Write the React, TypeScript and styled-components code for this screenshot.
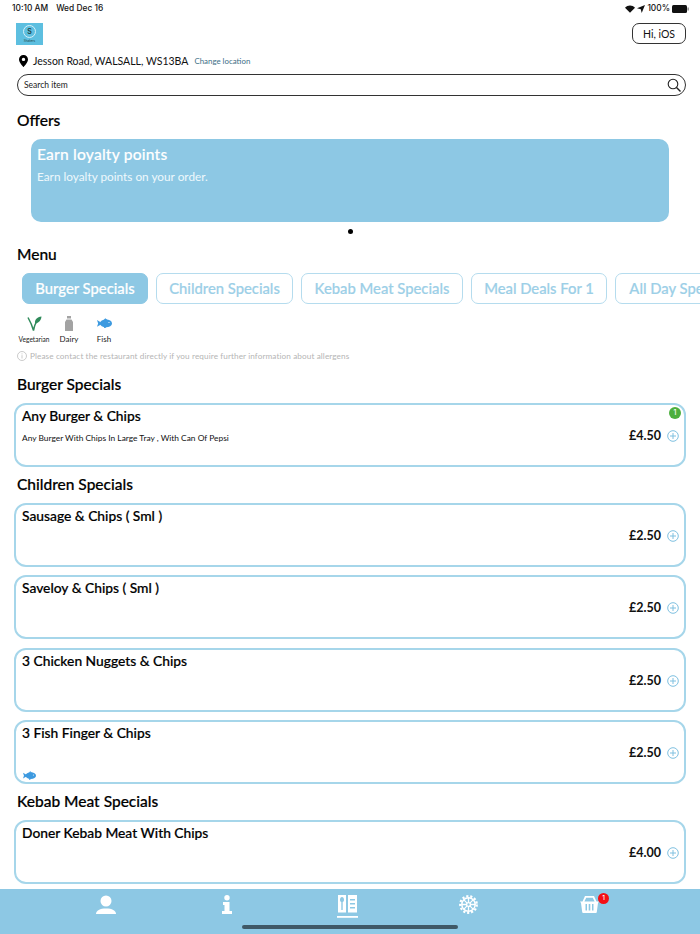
import React from "react";
import styled, { createGlobalStyle } from "styled-components";

const BLUE = "#8dc8e4";
const Global = createGlobalStyle`
  html, body { margin: 0; padding: 0; background: #fff; }
  body { font-family: Lato, "Noto Sans", sans-serif; color: #000; }
`;
const Page = styled.div`
  width: 700px; height: 934px; overflow: hidden; display: flex; flex-direction: column; position: relative;
`;
const Content = styled.main`
  height: 889px; overflow: hidden; flex: none;
`;
const StatusBar = styled.div`
  height: 15px; padding: 1px 11px 0 12px; display: flex; justify-content: space-between; align-items: center;
  font: 500 8.4px/15px Inter, sans-serif; color: #111;
`;
const StatusLeft = styled.div`display: flex; gap: 8px;`;
const StatusRight = styled.div`display: flex; align-items: center; gap: 2px;`;
const Header = styled.header`
  display: flex; justify-content: space-between; align-items: flex-start; padding: 7px 14px 0 16px; height: 24px;
`;
const Logo = styled.div`
  width: 27px; height: 22px; background: #5dbfe0; display: flex; flex-direction: column; align-items: center;
`;
const LogoRing = styled.div`
  width: 11px; height: 11px; margin-top: 2px; border: 1px solid #d8f0f8; border-radius: 50%;
  font: 600 7px/11px Inter, sans-serif; color: #244; text-align: center;
`;
const LogoText = styled.div`font: 3px/4px Inter, sans-serif; color: #244; margin-top: 1px;`;
const HiButton = styled.button`
  width: 54px; height: 21px; padding: 0; background: #fff; border: 1px solid #333; border-radius: 7px;
  font: 400 10.5px Lato, sans-serif; color: #111;
`;
const LocationRow = styled.div`
  display: flex; align-items: center; height: 20px; margin-top: 4px; padding-left: 19px;
`;
const LocationText = styled.span`font-size: 10.5px; margin-left: 5px; color: #111;`;
const ChangeLink = styled.span`font-size: 7.9px; margin-left: 6px; color: #3d6f86;`;
const SearchBar = styled.div`
  margin: 3px 14px 0 17px; height: 20px; border: 1px solid #333; border-radius: 11px; padding: 0 4px 0 6px;
  display: flex; align-items: center; justify-content: space-between; font-size: 8.5px; color: #222;
`;
const Heading = styled.h2<{ $top: number; $size?: number }>`
  margin: ${(p) => p.$top}px 0 0 17px; font-size: ${(p) => p.$size ?? 15.5}px; line-height: 20px; font-weight: 500; color: #000;
  -webkit-text-stroke: 0.2px #000;
`;
const Banner = styled.section`
  margin: 9px 31px 0; height: 83px; background: ${BLUE}; border-radius: 10px; padding: 5px 6px; box-sizing: border-box; color: #fff;
`;
const BannerTitle = styled.div`font-size: 15.6px; line-height: 20px; font-weight: 500; letter-spacing: 0.2px; -webkit-text-stroke: 0.15px #fff;`;
const BannerText = styled.div`font-size: 11.8px; line-height: 16px; margin-top: 5px; color: #eef8fc;`;
const Dot = styled.div`width: 5px; height: 5px; border-radius: 50%; background: #000; margin: 7px auto 0;`;
const Tabs = styled.nav`display: flex; gap: 8px; margin: 9px 0 0 22px; width: 800px;`;
const Tab = styled.div<{ $active?: boolean; $w: number }>`
  flex: none; width: ${(p) => p.$w}px; height: 31px; box-sizing: border-box; border-radius: 7px;
  border: 1px solid ${(p) => (p.$active ? BLUE : "#b5dcee")}; background: ${(p) => (p.$active ? BLUE : "#fff")};
  color: ${(p) => (p.$active ? "#fff" : "#9ccfe7")}; font-size: 14.8px; font-weight: 500; line-height: 29px; text-align: center; white-space: nowrap; overflow: hidden;
  -webkit-text-stroke: 0.2px ${(p) => (p.$active ? "#fff" : "#9ccfe7")};
`;
const Legend = styled.div`display: flex; margin: 9px 0 0 17px;`;
const LegendItem = styled.div<{ $w: number }>`
  width: ${(p) => p.$w}px; display: flex; flex-direction: column; align-items: center;
`;
const LegendIcon = styled.div`height: 20px; display: flex; align-items: center; justify-content: center;`;
const LegendLabel = styled.div<{ $size: number }>`font-size: ${(p) => p.$size}px; line-height: 12px; color: #222;`;
const Note = styled.div`
  display: flex; align-items: center; gap: 3px; margin: 5px 0 0 17px; font-size: 8.2px; line-height: 12px; color: #b5b5b5; letter-spacing: 0.1px;
`;
const Card = styled.article<{ $top: number }>`
  position: relative; margin: ${(p) => p.$top}px 14px 0; height: 64px; box-sizing: border-box;
  border: 2px solid #a6d6ea; border-radius: 12px; padding: 1px 6px;
`;
const ItemName = styled.div`font-size: 13.8px; line-height: 20px; font-weight: 500; color: #000; -webkit-text-stroke: 0.2px #000;`;
const ItemDesc = styled.div`font-size: 8.4px; line-height: 12px; margin-top: 6px; color: #111;`;
const PriceRow = styled.div`
  position: absolute; right: 5px; top: 22px; display: flex; align-items: center; gap: 6px; font-size: 12.5px; font-weight: 700; line-height: 18px; color: #111;
`;
const CountBadge = styled.div`
  position: absolute; right: 3px; top: 2px; width: 12px; height: 12px; border-radius: 50%; background: #4caf3d; color: #fff;
  font: 500 7px/12px Inter, sans-serif; text-align: center;
`;
const CardIcon = styled.div`position: absolute; left: 7px; bottom: 2px; line-height: 0;`;
const Footer = styled.footer`
  position: relative; height: 45px; background: ${BLUE}; display: flex; align-items: flex-start;
`;
const FooterItem = styled.div<{ $left: number; $top: number }>`
  position: absolute; left: ${(p) => p.$left}px; top: ${(p) => p.$top}px; line-height: 0;
`;
const CartBadge = styled.div`
  position: absolute; left: 598px; top: 4px; width: 11px; height: 11px; border-radius: 50%; background: #f40f14; color: #fff;
  font: 500 6.5px/11px Inter, sans-serif; text-align: center;
`;
const HomeBar = styled.div`
  position: absolute; left: 242px; bottom: 5px; width: 216px; height: 4px; border-radius: 2px; background: #3f5967;
`;

const Plus = () => (
  <svg width="12" height="12" viewBox="0 0 12 12" fill="none" stroke="#7fc0e0" strokeWidth="1">
    <circle cx="6" cy="6" r="5.3" /><path d="M6 3v6M3 6h6" />
  </svg>
);
const Fish = ({ w = 15 }: { w?: number }) => (
  <svg width={w} height={w * 0.72} viewBox="0 0 20 14" fill="#3d9ae0">
    <ellipse cx="12" cy="7" rx="8" ry="5.300" />
    <path d="M0 2.500 6 6v2l-6 3.500L1.500 7ZM9 2.500 11 0l3 2.500ZM9 11l1 3 3-2.500Z" />
    <circle cx="16" cy="5.800" r=".8" fill="#fff" />
  </svg>
);
const Pin = () => (
  <svg width="9" height="12" viewBox="0 0 9 12"><path fillRule="evenodd" d="M4.500 0A4.400 4.400 0 0 0 0 4.400C0 7.500 4.500 12 4.500 12S9 7.500 9 4.400A4.400 4.400 0 0 0 4.500 0Zm0 2.700a1.700 1.700 0 1 1 0 3.400 1.700 1.700 0 0 1 0-3.400Z" fill="#000" /></svg>
);
const SearchIcon = () => (
  <svg width="14" height="14" viewBox="0 0 14 14" fill="none" stroke="#222" strokeWidth="1.100"><circle cx="6" cy="6" r="4.800" /><path d="m9.500 9.500 4 4" strokeWidth="1.400" /></svg>
);
const Items = ["Sausage & Chips ( Sml )", "Saveloy & Chips ( Sml )", "3 Chicken Nuggets & Chips"];

const Price = ({ v }: { v: string }) => <PriceRow>{v}<Plus /></PriceRow>;

export default function App() {
  return (
    <Page>
      <Global />
      <Content>
        <StatusBar>
          <StatusLeft><span>10:10 AM</span><span>Wed Dec 16</span></StatusLeft>
          <StatusRight>
            <svg width="10" height="8" viewBox="0 0 11 8"><path d="M5.500 8 0 2.500C3 -.7 8 -.7 11 2.500Z" fill="#111" /></svg>
            <svg width="8" height="8" viewBox="0 0 8 8"><path d="M8 0 4.700 8 3.800 4.200 0 3.300Z" fill="#111" /></svg>
            <span>100%</span>
            <svg width="17" height="8" viewBox="0 0 17 8"><rect width="15" height="8" rx="1.500" fill="#111" /><rect x="15.500" y="2.500" width="1.200" height="3" fill="#777" /></svg>
          </StatusRight>
        </StatusBar>
        <Header>
          <Logo><LogoRing>S</LogoRing><LogoText>Shakers</LogoText></Logo>
          <HiButton>Hi, iOS</HiButton>
        </Header>
        <LocationRow>
          <Pin />
          <LocationText>Jesson Road, WALSALL, WS13BA</LocationText>
          <ChangeLink>Change location</ChangeLink>
        </LocationRow>
        <SearchBar>Search item<SearchIcon /></SearchBar>
        <Heading $top={14} $size={15.6}>Offers</Heading>
        <Banner>
          <BannerTitle>Earn loyalty points</BannerTitle>
          <BannerText>Earn loyalty points on your order.</BannerText>
        </Banner>
        <Dot />
        <Heading $top={10}>Menu</Heading>
        <Tabs>
          <Tab $active $w={126}>Burger Specials</Tab>
          <Tab $w={137}>Children Specials</Tab>
          <Tab $w={162}>Kebab Meat Specials</Tab>
          <Tab $w={136}>Meal Deals For 1</Tab>
          <Tab $w={131}>All Day Specials</Tab>
        </Tabs>
        <Legend>
          <LegendItem $w={34}>
            <LegendIcon>
              <svg width="15" height="15" viewBox="0 0 15 15" fill="none" stroke="#2f8a5a" strokeWidth="1.500">
                <path d="M1 1.500C3 5 5 9 6.500 14.500 7.500 9 9 6 11 4" />
                <path d="M14.500 .5C10 1 7.500 3.500 8 7.500 12 7 14 4.500 14.500 .5Z" fill="#2f8a5a" stroke="none" />
              </svg>
            </LegendIcon>
            <LegendLabel $size={6.6}>Vegetarian</LegendLabel>
          </LegendItem>
          <LegendItem $w={36}>
            <LegendIcon>
              <svg width="8" height="15" viewBox="0 0 8 15" fill="#a3a3a3"><rect x="2" y="0" width="4" height="2.500" /><path d="M1.500 3.500h5L8 6v9H0V6Z" /></svg>
            </LegendIcon>
            <LegendLabel $size={8}>Dairy</LegendLabel>
          </LegendItem>
          <LegendItem $w={34}>
            <LegendIcon><Fish /></LegendIcon>
            <LegendLabel $size={8}>Fish</LegendLabel>
          </LegendItem>
        </Legend>
        <Note>
          <svg width="10" height="10" viewBox="0 0 10 10" fill="none" stroke="#b5b5b5" strokeWidth=".7"><circle cx="5" cy="5" r="4.500" /><path d="M5 4.200V7.500M5 2.400v1" /></svg>
          Please contact the restaurant directly if you require further information about allergens
        </Note>
        <Heading $top={12}>Burger Specials</Heading>
        <Card $top={9}>
          <ItemName>Any Burger &amp; Chips</ItemName>
          <ItemDesc>Any Burger With Chips In Large Tray , With Can Of Pepsi</ItemDesc>
          <CountBadge>1</CountBadge>
          <Price v="£4.50" />
        </Card>
        <Heading $top={7}>Children Specials</Heading>
        {Items.map((name, i) => (
          <Card key={name} $top={i === 0 ? 9 : i === 2 ? 9 : 8}>
            <ItemName>{name}</ItemName>
            <Price v="£2.50" />
          </Card>
        ))}
        <Card $top={8}>
          <ItemName>3 Fish Finger &amp; Chips</ItemName>
          <Price v="£2.50" />
          <CardIcon><Fish w={13} /></CardIcon>
        </Card>
        <Heading $top={7}>Kebab Meat Specials</Heading>
        <Card $top={9}>
          <ItemName>Doner Kebab Meat With Chips</ItemName>
          <Price v="£4.00" />
        </Card>
      </Content>
      <Footer>
        <FooterItem $left={96} $top={6}>
          <svg width="20" height="19" viewBox="0 0 20 19" fill="#fff"><circle cx="10" cy="6" r="5.500" /><path d="M0 19c0-3.500 4-5.500 10-5.500S20 15.500 20 19Z" /></svg>
        </FooterItem>
        <FooterItem $left={222} $top={6}>
          <svg width="10" height="19" viewBox="0 0 10 19" fill="#fff"><circle cx="5" cy="2.700" r="2.700" /><path d="M1 7h6.500v9H10v3H0v-3h2.500v-6H1Z" /></svg>
        </FooterItem>
        <FooterItem $left={337} $top={6}>
          <svg width="21" height="23" viewBox="0 0 21 23" fill="#fff">
            <path fillRule="evenodd" d="M1 0h8v17.500H1Zm4 2c-1.200 0-2 1.300-2 2.800 0 1.100.5 1.900 1.300 2.300V15h1.400V7.100C6.500 6.700 7 5.900 7 4.800 7 3.300 6.200 2 5 2Z" />
            <path fillRule="evenodd" d="M11 0h9v17.500h-9Zm2 4v1.500h5V4Zm0 4v1.500h5V8Zm0 4v1.500h5V12Z" />
            <rect y="21" width="21" height="1.800" />
          </svg>
        </FooterItem>
        <FooterItem $left={459} $top={6}>
          <svg width="19" height="19" viewBox="0 0 19 19" fill="none" stroke="#fff">
            <circle cx="9.500" cy="9.500" r="8.300" strokeWidth="2.200" strokeDasharray="2.200 1.860" />
            <circle cx="9.500" cy="9.500" r="6.700" strokeWidth="1.500" />
            <circle cx="9.500" cy="9.500" r="1.900" strokeWidth="1.400" />
            <path d="M9.500 3v4.500M9.500 11.500V16M3 9.500h4.500M11.500 9.500H16M4.900 4.900l3.200 3.200M10.900 10.900l3.200 3.200M14.100 4.900l-3.200 3.200M8.100 10.900l-3.200 3.200" strokeWidth="1.300" />
          </svg>
        </FooterItem>
        <FooterItem $left={580} $top={7}>
          <svg width="19" height="17" viewBox="0 0 19 17" fill="#fff">
            <path fillRule="evenodd" d="M5 0h9l2.500 5.500H19l-1 1.500L16.800 16a1 1 0 0 1-1 1H3.200a1 1 0 0 1-1-1L1 7 0 5.500h2.500Zm1.200 1.700L4.400 5.500h10.200l-1.800-3.800ZM5.500 8v6.500H7V8Zm3.200 0v6.500h1.600V8ZM12 8v6.500h1.500V8Z" />
          </svg>
        </FooterItem>
        <CartBadge>1</CartBadge>
        <HomeBar />
      </Footer>
    </Page>
  );
}
